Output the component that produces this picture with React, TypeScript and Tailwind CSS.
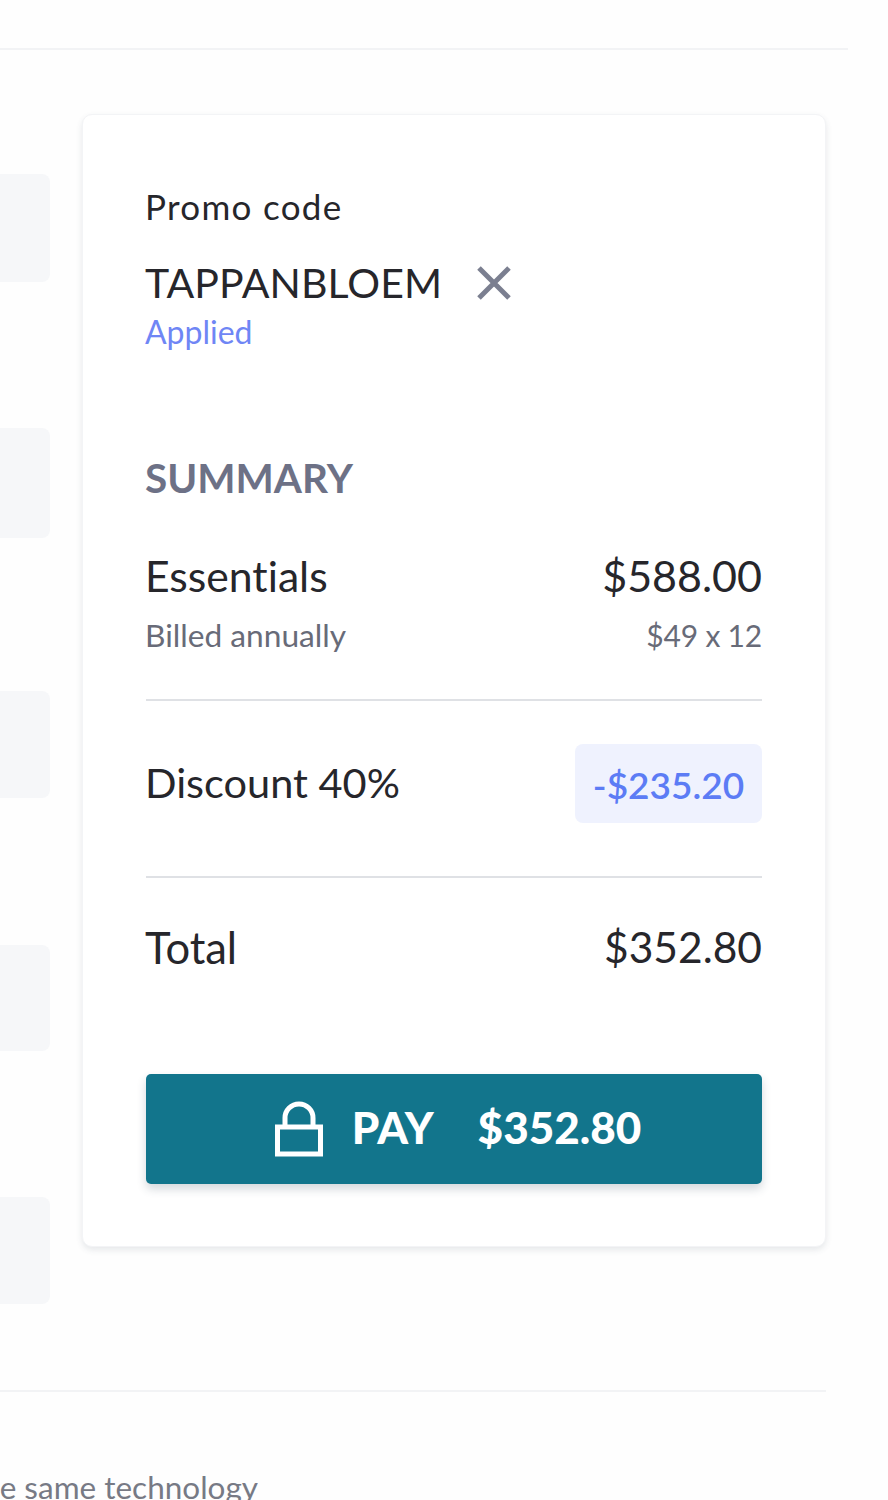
export default function App() {
  const blocks = ["mt-[60px] h-[108px]", "mt-[146px] h-[110px]", "mt-[153px] h-[107px]", "mt-[147px] h-[106px]", "mt-[146px] h-[107px]"];
  return (
    <div className="h-[1500px] w-[888px] overflow-hidden bg-[#fefefe] font-['Lato',sans-serif] text-[#26262b] [font-variant-ligatures:none]">
      <div className="h-[50px] w-[848px] border-b-2 border-[#f2f3f5]" />
      <div className="mt-[64px] flex w-[826px] items-start gap-[32px]">
        <div className="flex w-[50px] shrink-0 flex-col">
          {blocks.map((b) => (
            <div key={b} className={`${b} rounded-r-[8px] bg-[#f6f7f9]`} />
          ))}
        </div>
        <section className="h-[1133px] w-[744px] rounded-[10px] border border-[#f3f4f6] bg-white px-[63px] pt-[70px] shadow-[0_3px_6px_rgba(60,70,90,0.12)]">
          <div className="-ml-px text-[35px] leading-[42px] tracking-[1.3px]">Promo code</div>
          <div className="mt-[36px] flex h-[40px] items-center gap-[34px]">
            <span className="-ml-px text-[41px] leading-[40px] tracking-[0.1px]">TAPPANBLOEM</span>
            <svg width="36" height="36" viewBox="0 0 36 36" fill="none" stroke="#7b7f90" strokeWidth="5">
              <path d="M3 3 33 33M33 3 3 33" />
            </svg>
          </div>
          <div className="mt-[9px] -ml-px text-[32px] leading-[40px] text-[#6f86f5]">Applied</div>
          <h2 className="mt-[102px] -ml-px text-[40.5px] font-bold leading-[48px] text-[#6d7186]">SUMMARY</h2>
          <div className="mt-[50px] flex items-center justify-between text-[42.7px] leading-[48px]">
            <span className="-ml-px">Essentials</span>
            <span className="text-[43px]">$588.00</span>
          </div>
          <div className="mt-[17px] flex items-center justify-between text-[31.7px] leading-[36px] text-[#686b78]">
            <span className="-ml-px">Billed annually</span>
            <span className="text-[30px] tracking-[-0.2px]">$49 x 12</span>
          </div>
          <div className="mt-[46px] h-[2px] bg-[#dfe1e5]" />
          <div className="mt-[43px] flex items-center justify-between">
            <span className="-ml-px pb-[3px] text-[41.5px]">Discount 40%</span>
            <span className="flex h-[79px] w-[187px] items-center justify-center rounded-[8px] bg-[#eff2fe] pt-[2px] text-[37px] font-semibold text-[#5c7cf5]">-$235.20</span>
          </div>
          <div className="mt-[53px] h-[2px] bg-[#dfe1e5]" />
          <div className="mt-[45px] flex items-center justify-between leading-[48px]">
            <span className="-ml-px text-[43.5px]">Total</span>
            <span className="text-[42.5px]">$352.80</span>
          </div>
          <button className="mt-[103px] flex h-[110px] w-full items-center justify-center rounded-[5px] bg-[#12758c] pl-[7px] text-[44px] font-black text-white shadow-[0_5px_10px_rgba(40,60,80,0.2)]">
            <svg width="50" height="56" viewBox="0 0 50 56" fill="none" stroke="white" strokeWidth="5" className="mr-[28px] mb-[1px]">
              <path d="M3.5 26h43v27h-43zM11 26v-9a14 14 0 0 1 28 0v9" />
            </svg>
            <span className="pb-[4px]">PAY</span>
            <span className="ml-[44px] pb-[4px]">$352.80</span>
          </button>
        </section>
      </div>
      <div className="mt-[86px] h-[2px] w-[826px] bg-[#f2f3f5]" />
      <div className="mt-[77px] flex w-[258px] justify-end overflow-hidden whitespace-nowrap text-[31.5px] leading-[36px] text-[#777a85]">
        the same technology
      </div>
    </div>
  );
}
